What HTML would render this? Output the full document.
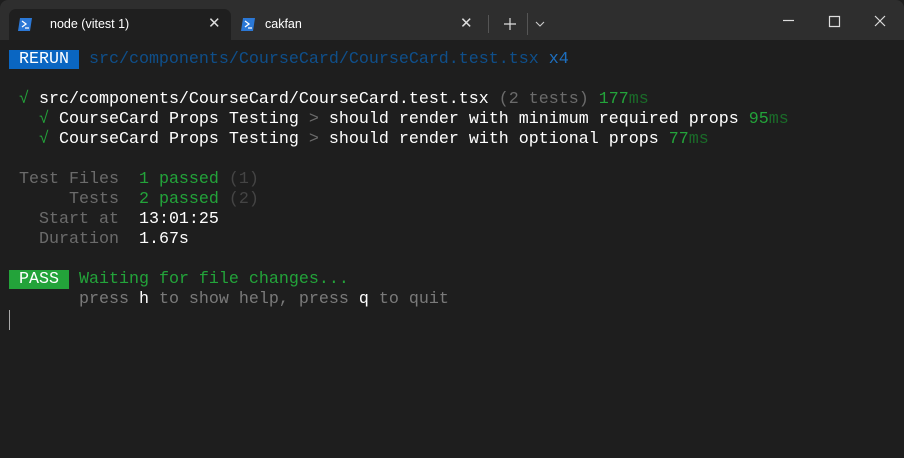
<!DOCTYPE html><html><head><style>
body{margin:0;width:904px;height:458px;background:#1e1e1e;overflow:hidden;position:relative;font-family:"Liberation Sans",sans-serif}
.tb{position:absolute;left:0;top:0;width:904px;height:40px;background:#2e2e2e;border-radius:8px 8px 0 0}
.tab{position:absolute;top:9px;height:31px;border-radius:7px 7px 0 0;color:#fff;font-size:12.5px}
.tab span{position:absolute;left:41px;top:8px}
.x{position:absolute;font-size:15px;color:#ddd;top:5px}
.t{position:absolute;left:9px;font-family:"Liberation Mono",monospace;font-size:16.67px;white-space:pre;line-height:20px;color:#d4d4d4}
.g{color:#23a33a}.gd{color:#1a6b29}.dim{color:#6b6b6b}.w{color:#fff}.b{color:#0f4f8a}
</style></head><body>
<div class="tb"></div>
<div class="tab" style="left:9px;width:222px;background:#1f1f1f"><svg style="position:absolute;left:9px;top:9px" width="14" height="13"><path d="M2 0H14L12 13H0Z" fill="#2b78d6"/><path d="M4 3L8 6L4 9M7 10H11" stroke="#fff" stroke-width="1.3" fill="none"/></svg><span>node (vitest 1)</span><div class="x" style="left:199px">✕</div></div>
<div class="tab" style="left:238px;width:242px"><svg style="position:absolute;left:3px;top:9px" width="14" height="13"><path d="M2 0H14L12 13H0Z" fill="#2b78d6"/><path d="M4 3L8 6L4 9M7 10H11" stroke="#fff" stroke-width="1.3" fill="none"/></svg><span style="left:27px">cakfan</span><div class="x" style="left:222px">✕</div></div>
<div style="position:absolute;left:488px;top:15px;width:1px;height:18px;background:#555"></div>
<div style="position:absolute;left:527px;top:13px;width:1px;height:22px;background:#555"></div>
<svg style="position:absolute;left:503px;top:17px" width="14" height="14"><path d="M7 1V13M1 7H13" stroke="#ddd" stroke-width="1.2"/></svg>
<svg style="position:absolute;left:535px;top:21px" width="10" height="6"><path d="M1 1L5 5L9 1" stroke="#ccc" stroke-width="1.1" fill="none"/></svg>
<svg style="position:absolute;left:780px;top:14px" width="120" height="14"><path d="M3 6.5H14" stroke="#ddd" stroke-width="1.2"/><path d="M49.5 2.5H59.5V12.5H49.5Z" stroke="#ddd" stroke-width="1.2" fill="none"/><path d="M95 2L105 12M105 2L95 12" stroke="#ddd" stroke-width="1.2"/></svg>
<div class="t" style="top:50px"><span style="background:#0a66c2;color:#fff"> RERUN </span> <span class="b">src/components/CourseCard/CourseCard.test.tsx</span> <span style="color:#1d6fbf">x4</span></div>
<div class="t" style="top:90px"> <span class="g">√</span> <span class="w">src/components/CourseCard/CourseCard.test.tsx</span> <span class="dim">(2 tests)</span> <span class="g">177</span><span class="gd">ms</span>
   <span class="g">√</span> <span class="w">CourseCard Props Testing</span> <span class="dim">&gt;</span> <span class="w">should render with minimum required props</span> <span class="g">95</span><span class="gd">ms</span>
   <span class="g">√</span> <span class="w">CourseCard Props Testing</span> <span class="dim">&gt;</span> <span class="w">should render with optional props</span> <span class="g">77</span><span class="gd">ms</span>

<span class="dim"> Test Files</span>  <span class="g">1 passed</span> <span class="dim" style="color:#444">(1)</span>
<span class="dim">      Tests</span>  <span class="g">2 passed</span> <span class="dim" style="color:#444">(2)</span>
<span class="dim">   Start at</span>  <span class="w">13:01:25</span>
<span class="dim">   Duration</span>  <span class="w">1.67s</span>

<span style="background:#23a33a;color:#fff"> PASS </span> <span class="g">Waiting for file changes...</span>
       <span class="dim" style="color:#7a7a7a">press </span><span class="w">h</span><span style="color:#7a7a7a"> to show help, press </span><span class="w">q</span><span style="color:#7a7a7a"> to quit</span></div>
<div style="position:absolute;left:9px;top:310px;width:1px;height:20px;background:#aaa"></div>
</body></html>
